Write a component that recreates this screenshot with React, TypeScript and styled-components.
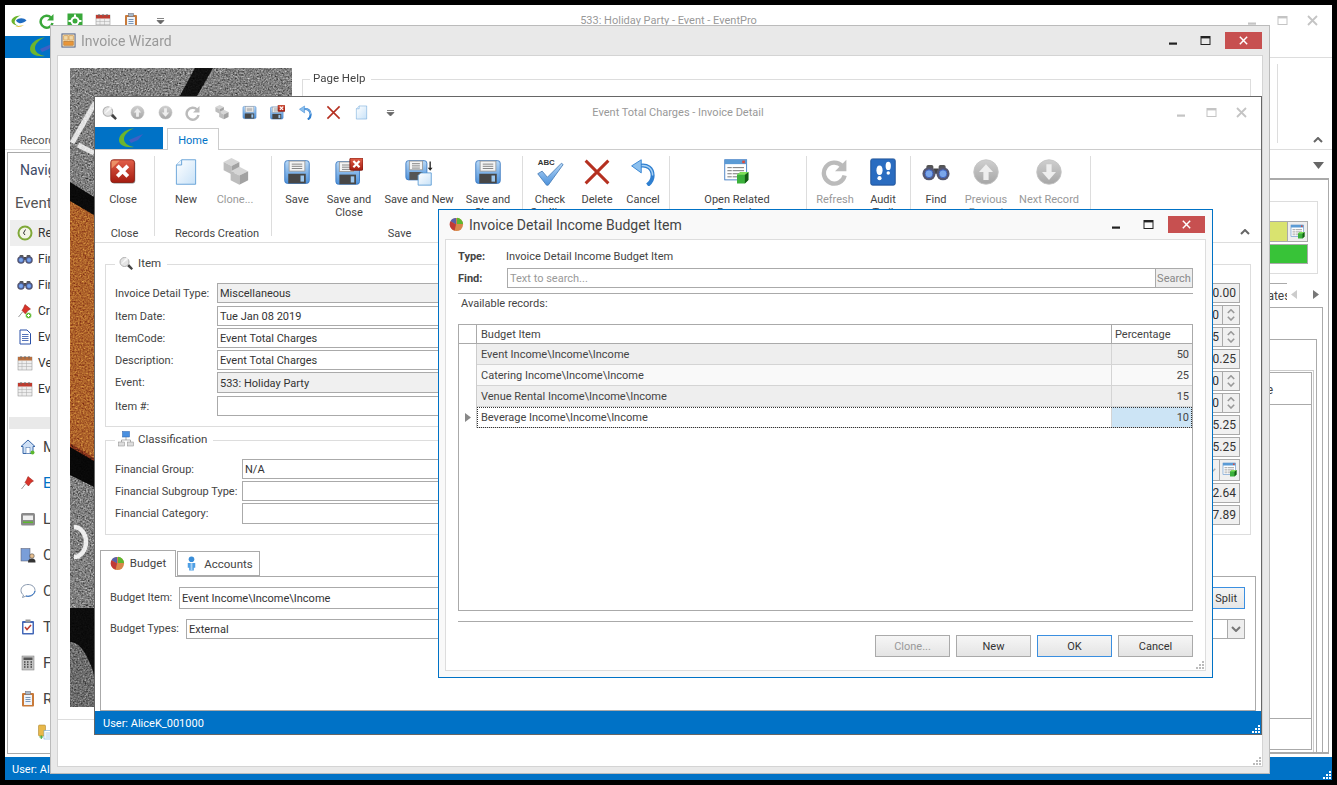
import React from "react";
import styled, { createGlobalStyle } from "styled-components";

const GlobalStyle = createGlobalStyle`
  html, body { margin: 0; padding: 0; background: #000; }
  body { font-family: Roboto, "Noto Sans", sans-serif; font-size: 11px; color: #333; }
  * { box-sizing: border-box; }
`;

const BLUE = "#0072c6";

/* ---------- shell ---------- */

const Desktop = styled.div`
  position: relative;
  width: 1337px;
  height: 785px;
  background: #000;
  overflow: hidden;
`;

const Win = styled.div<{ $l: number; $t: number; $w: number; $h: number; $z: number }>`
  position: absolute;
  left: ${(p) => p.$l}px;
  top: ${(p) => p.$t}px;
  width: ${(p) => p.$w}px;
  height: ${(p) => p.$h}px;
  z-index: ${(p) => p.$z};
  display: flex;
  flex-direction: column;
`;

const MainWin = styled(Win)`
  background: #fff;
`;

const WizardWin = styled(Win)`
  background: #e9e9e9;
  border: 1px solid #bbb;
`;

const DetailWin = styled(Win)`
  background: #fff;
  border: 1px solid #666;
`;

const DialogWin = styled(Win)`
  background: #f9f9f9;
  border: 1px solid ${BLUE};
`;

const TitleRow = styled.div<{ $h: number }>`
  flex: none;
  height: ${(p) => p.$h}px;
  display: grid;
  grid-template-columns: 1fr auto 1fr;
  align-items: center;
  color: #999;
`;

const Qat = styled.div`
  display: flex;
  align-items: center;
`;

const QatSlot = styled.div`
  width: 28px;
  display: flex;
  justify-content: center;
`;

const QatDrop = styled.div`
  width: 14px;
  margin-left: 8px;
  display: flex;
  justify-content: center;
`;

const Controls = styled.div`
  justify-self: end;
  display: flex;
  align-items: center;
  padding-right: 5px;
`;

const Ctl = styled.div`
  width: 30px;
  display: flex;
  justify-content: center;
`;

const CaptionRow = styled.div`
  flex: none;
  height: 29px;
  display: flex;
  align-items: center;
  padding: 0 7px 0 10px;
  gap: 5px;
  font-size: 14px;
`;

const CaptionText = styled.div<{ $dim?: boolean }>`
  flex: 1;
  color: ${(p) => (p.$dim ? "#999" : "#444")};
`;

const CaptionBtn = styled.div`
  width: 27px;
  display: flex;
  justify-content: center;
`;

const CloseBtn = styled.div`
  width: 37px;
  height: 17px;
  margin-left: 1.5px;
  background: #c75050;
  display: flex;
  align-items: center;
  justify-content: center;
`;

const StatusBar = styled.div`
  flex: none;
  height: 23px;
  background: ${BLUE};
  color: #fff;
  display: flex;
  align-items: center;
  justify-content: space-between;
  position: relative;
`;

const StatusText = styled.div<{ $pl: number }>`
  padding: 1px 0 0 ${(p) => p.$pl}px;
`;

const GripWrap = styled.div`
  align-self: flex-end;
  padding: 0 1px 1px 0;
  line-height: 0;
`;

/* ---------- main window ---------- */

const MainTabs = styled.div`
  flex: none;
  height: 22px;
  display: flex;
  border-bottom: 1px solid #ddd;
`;

const LogoTab = styled.div<{ $w: number; $pl: number }>`
  width: ${(p) => p.$w}px;
  height: 22px;
  padding-left: ${(p) => p.$pl}px;
  background: ${BLUE};
  display: flex;
  align-items: center;
`;

const MainRibbon = styled.div`
  flex: none;
  height: 92px;
  display: flex;
  justify-content: space-between;
  border-bottom: 1px solid #ddd;
`;

const RibbonCaption = styled.div`
  align-self: flex-end;
  padding: 0 0 2px 15px;
  color: #555;
`;

const RibbonEnd = styled.div`
  margin: 6px 0;
  width: 55px;
  border-left: 1px solid #ddd;
  display: flex;
  align-items: flex-end;
  justify-content: flex-end;
  padding-right: 9px;
`;

const MainBody = styled.div`
  flex: 1;
  min-height: 0;
  display: flex;
  gap: 4px;
  padding: 2px 3px 3px 2px;
`;

const Nav = styled.div`
  flex: none;
  width: 252px;
  border: 1px solid #aaa;
  display: flex;
  flex-direction: column;
`;

const NavTitle = styled.div`
  height: 34px;
  padding: 9px 0 0 12px;
  font-size: 14px;
  color: #3d4a66;
`;

const NavSection = styled.div`
  height: 33px;
  padding: 7px 0 0 7px;
  font-size: 15px;
  color: #555;
`;

const NavItem = styled.div<{ $on?: boolean }>`
  height: 26px;
  margin-left: 2px;
  padding-left: 7px;
  display: flex;
  align-items: center;
  gap: 5px;
  font-size: 12px;
  background: ${(p) => (p.$on ? "#eee" : "transparent")};
`;

const NavBand = styled.div`
  height: 12px;
  margin: 15px 0 0 1px;
  background: #e9e9e9;
`;

const NavBig = styled.div<{ $on?: boolean }>`
  height: 36px;
  padding-left: 12px;
  display: flex;
  align-items: center;
  gap: 7px;
  font-size: 15px;
  color: ${(p) => (p.$on ? BLUE : "#444")};
`;

const NavTiny = styled.div`
  height: 30px;
  padding-left: 29px;
  display: flex;
  align-items: center;
`;

const MainContent = styled.div`
  flex: 1;
  min-width: 0;
  display: flex;
  flex-direction: column;
`;

const ContentHead = styled.div`
  flex: none;
  height: 26px;
  display: flex;
  align-items: center;
  justify-content: flex-end;
  padding-right: 5px;
`;

const ContentPanel = styled.div`
  flex: 1;
  min-height: 0;
  border-top: 2px solid #aaa;
  border-right: 1px solid #aaa;
  border-bottom: 2px solid #aaa;
  padding-top: 21px;
  display: flex;
  flex-direction: column;
`;

const StateBox = styled.div`
  flex: none;
  height: 73px;
  margin-right: 10px;
  border: 1px solid #ddd;
  padding: 19px 9px 0 0;
  display: flex;
  flex-direction: column;
  align-items: flex-end;
  gap: 2px;
`;

const StateRow = styled.div`
  display: flex;
`;

const Swatch = styled.div<{ $c: string; $w: number; $h: number }>`
  width: ${(p) => p.$w}px;
  height: ${(p) => p.$h}px;
  background: ${(p) => p.$c};
  border: 1px solid #aaa;
`;

const SquareBtn = styled.div`
  width: 21px;
  height: 21px;
  margin-left: -1px;
  border: 1px solid #aaa;
  background: #eee;
  display: flex;
  align-items: center;
  justify-content: center;
`;

const StripRow = styled.div`
  flex: none;
  height: 24px;
  margin-top: 9px;
  display: flex;
  justify-content: flex-end;
  padding-right: 5px;
`;

const StripTab = styled.div`
  width: 200px;
  border-top: 1px solid #aaa;
  padding: 5px 0 0 150px;
  font-size: 12px;
  color: #444;
  overflow: hidden;
  white-space: nowrap;
`;

const StripArrows = styled.div`
  width: 36px;
  padding: 2px 4px 0 4px;
  display: flex;
  justify-content: space-between;
  align-items: center;
  height: 21px;
`;

const Nest = styled.div<{ $mr: number; $pt: number; $c?: string }>`
  flex: 1;
  min-height: 0;
  margin-right: ${(p) => p.$mr}px;
  padding-top: ${(p) => p.$pt}px;
  border: 1px solid ${(p) => p.$c ?? "#aaa"};
  border-bottom: none;
  display: flex;
  flex-direction: column;
`;

const ListPane = styled.div`
  flex: 1;
  min-height: 0;
  margin: 1px 1px 2px 0;
  border: 1px solid #aaa;
  display: flex;
  flex-direction: column;
`;

const ListHead = styled.div`
  flex: none;
  height: 32px;
  border-bottom: 1px solid #aaa;
  text-align: right;
  padding: 10px 38px 0 0;
  font-size: 12px;
  color: #444;
`;

const ListBody = styled.div`
  flex: 1;
`;

const ListFoot = styled.div`
  flex: none;
  height: 31px;
  border-top: 1px solid #aaa;
`;

/* ---------- wizard ---------- */

const WizardInner = styled.div`
  flex: 1;
  min-height: 0;
  margin: 0 6px 6px 6px;
  border: 1px solid #d4d4d4;
  background: #fff;
  display: flex;
  flex-direction: column;
`;

const WizardMain = styled.div`
  flex: none;
  display: flex;
  gap: 10px;
  padding: 12px 11px 12px 12px;
`;

const Photo = styled.div`
  flex: none;
  width: 222px;
  height: 639px;
  line-height: 0;
`;

const Grain = styled.rect`
  mix-blend-mode: overlay;
`;

const WizardFooter = styled.div`
  flex: 1;
  border-top: 1px solid #ddd;
  display: flex;
  justify-content: flex-end;
  align-items: flex-end;
  padding: 0 1px 1px 0;
`;

const Group = styled.fieldset<{ $c?: string; $mt?: number; $pt?: number }>`
  margin: ${(p) => p.$mt ?? 0}px 0 0 0;
  min-width: 0;
  padding: ${(p) => p.$pt ?? 0}px 10px 10px 9px;
  border: 1px solid ${(p) => p.$c ?? "#ddd"};
`;

const Legend = styled.legend<{ $h?: number }>`
  display: flex;
  align-items: center;
  gap: 4px;
  height: ${(p) => p.$h ?? 18}px;
  padding: 0 6px 2px 3px;
  color: #444;
  font-size: 11.5px;
`;

const HelpLegend = styled(Legend)`
  margin-left: -2px;
`;

const HelpGroup = styled(Group)`
  flex: 1;
  margin-top: 2px;
`;

/* ---------- detail window ---------- */

const DetailTabs = styled.div`
  flex: none;
  height: 22px;
  display: flex;
  align-items: flex-end;
  gap: 4px;
  border-bottom: 1px solid #ccc;
`;

const HomeTab = styled.div`
  width: 52px;
  height: 22px;
  margin-bottom: -1px;
  background: #fff;
  border: 1px solid #ccc;
  border-bottom: none;
  color: ${BLUE};
  text-align: center;
  line-height: 23px;
`;

const Ribbon = styled.div`
  flex: none;
  height: 93px;
  padding: 6px 8px 7px 0;
  display: flex;
  border-bottom: 1px solid #ddd;
`;

const RibbonGroup = styled.div<{ $w: number; $pl?: number }>`
  flex: none;
  width: ${(p) => p.$w}px;
  height: 80px;
  padding-left: ${(p) => p.$pl ?? 0}px;
  border-right: 1px solid #ddd;
  display: flex;
  flex-direction: column;
`;

const GroupTools = styled.div`
  flex: 1;
  min-height: 0;
  display: flex;
`;

const GroupName = styled.div`
  height: 13px;
  line-height: 13px;
  margin-bottom: -4px;
  text-align: center;
  color: #444;
  white-space: nowrap;
`;

const Tool = styled.div<{ $w: number; $off?: boolean }>`
  flex: none;
  width: ${(p) => p.$w}px;
  display: flex;
  flex-direction: column;
  align-items: center;
  color: ${(p) => (p.$off ? "#999" : "#444")};
`;

const ToolIcon = styled.div`
  height: 32px;
  margin-bottom: 5px;
  display: flex;
  align-items: center;
`;

const ToolLabel = styled.div`
  line-height: 13px;
  text-align: center;
`;

const Collapse = styled.div`
  margin-left: auto;
  align-self: flex-end;
  padding-right: 3px;
  line-height: 0;
`;

const DetailBody = styled.div`
  flex: 1;
  min-height: 0;
  padding: 12px 5px 0 5px;
  display: flex;
  flex-direction: column;
`;

const FormGrid = styled.div`
  flex: none;
  margin: 0 5px;
  display: grid;
  grid-template-columns: 1fr 521px;
  gap: 10px;
`;

const FormCol = styled.div`
  display: flex;
  flex-direction: column;
`;

const Row = styled.div<{ $h: number }>`
  height: ${(p) => p.$h}px;
  display: flex;
  align-items: flex-start;
`;

const Label = styled.div<{ $w: number }>`
  flex: none;
  width: ${(p) => p.$w}px;
  line-height: 22px;
  color: #444;
  white-space: nowrap;
`;

const PanelLabel = styled(Label)`
  line-height: 20px;
`;

const Field = styled.div<{ $ro?: boolean; $h?: number; $w?: number }>`
  flex: ${(p) => (p.$w ? "none" : 1)};
  width: ${(p) => (p.$w ? `${p.$w}px` : "auto")};
  min-width: 0;
  height: ${(p) => p.$h ?? 20}px;
  line-height: ${(p) => p.$h ?? 20}px;
  padding: 0 2px;
  border: 1px solid #aaa;
  background: ${(p) => (p.$ro ? "#f0f0f0" : "#fff")};
  color: #333;
  white-space: nowrap;
  overflow: hidden;
`;

const NumbersGroup = styled(Group)`
  margin-top: 9px;
  padding: 18px 10px 9px 9px;
  display: flex;
  flex-direction: column;
  align-items: flex-end;
  gap: 2px;
`;

const NumField = styled.div<{ $h?: number }>`
  width: 120px;
  height: ${(p) => p.$h ?? 20}px;
  border: 1px solid #aaa;
  background: #f0f0f0;
  display: flex;
  align-items: center;
  justify-content: flex-end;
  font-size: 12px;
  color: #333;
`;

const NumValue = styled.div`
  padding-right: 3px;
`;

const Spin = styled.div`
  flex: none;
  width: 17px;
  height: 100%;
  border-left: 1px solid #aaa;
  display: flex;
  flex-direction: column;
  align-items: center;
  justify-content: center;
  gap: 2px;
  line-height: 0;
`;

const ComboIconBtn = styled.div`
  flex: none;
  width: 20px;
  height: 100%;
  border-left: 1px solid #aaa;
  display: flex;
  align-items: center;
  justify-content: center;
`;

const ComboArrow = styled.div`
  padding-right: 3px;
  line-height: 0;
`;

const TabStrip = styled.div`
  flex: none;
  height: 26px;
  margin-top: 15px;
  display: flex;
  align-items: flex-end;
  position: relative;
  z-index: 1;
`;

const PageTab = styled.div<{ $w: number; $on?: boolean }>`
  width: ${(p) => p.$w}px;
  height: ${(p) => (p.$on ? 27 : 25)}px;
  margin-bottom: ${(p) => (p.$on ? -1 : 0)}px;
  margin-left: ${(p) => (p.$on ? 0 : 1)}px;
  padding-bottom: ${(p) => (p.$on ? 2 : 0)}px;
  border: 1px solid #aaa;
  border-bottom: ${(p) => (p.$on ? "none" : "1px solid #aaa")};
  background: #fff;
  display: flex;
  align-items: center;
  justify-content: center;
  gap: 5px;
  font-size: 11.5px;
  color: #444;
`;

const TabPanel = styled.div`
  flex: 1;
  min-height: 0;
  border: 1px solid #aaa;
  padding: 10px 10px 0 9px;
  display: flex;
  flex-direction: column;
  gap: 10px;
`;

const PanelRow = styled.div`
  display: flex;
  align-items: center;
`;

const SplitBtn = styled.div`
  flex: none;
  height: 22px;
  margin-left: 8px;
  padding: 0 7px;
  line-height: 21px;
  border: 1px solid #3b8fe0;
  background: linear-gradient(#f4f4f4, #e6e6e6);
  color: #333;
`;

const ComboBtn = styled.div`
  flex: none;
  width: 18px;
  height: 20px;
  margin-left: -1px;
  border: 1px solid #aaa;
  background: #eee;
  display: flex;
  align-items: center;
  justify-content: center;
`;

/* ---------- dialog ---------- */

const DialogInner = styled.div`
  flex: 1;
  min-height: 0;
  margin: 0 6px 6px 6px;
  border: 1px solid #ddd;
  background: #fff;
  padding: 7px 12px 0 12px;
  display: flex;
  flex-direction: column;
  position: relative;
`;

const InfoRow = styled.div<{ $h: number }>`
  flex: none;
  height: ${(p) => p.$h}px;
  display: flex;
  align-items: flex-start;
`;

const InfoKey = styled.div<{ $lh: number }>`
  flex: none;
  width: 48px;
  line-height: ${(p) => p.$lh}px;
  font-weight: 700;
  color: #444;
`;

const InfoValue = styled.div`
  line-height: 20px;
  color: #444;
`;

const SearchInput = styled.div`
  flex: 1;
  margin-left: 1px;
  height: 20px;
  line-height: 19px;
  padding: 0 2px;
  border: 1px solid #aaa;
  color: #999;
`;

const SearchBtn = styled.div`
  flex: none;
  width: 38px;
  height: 20px;
  margin-left: -1px;
  border: 1px solid #aaa;
  background: #eee;
  text-align: center;
  line-height: 19px;
  color: #888;
`;

const Rule = styled.div<{ $mt: number }>`
  flex: none;
  margin-top: ${(p) => p.$mt}px;
  height: 1px;
  background: #aaa;
`;

const AvailableLabel = styled.div`
  flex: none;
  height: 30px;
  padding: 3px 0 0 3px;
  color: #444;
`;

const DataGrid = styled.div`
  flex: 1;
  min-height: 0;
  border: 1px solid #aaa;
`;

const GridRow = styled.div<{ $head?: boolean }>`
  display: flex;
  height: ${(p) => (p.$head ? 19 : 21)}px;
  border-bottom: ${(p) => (p.$head ? "1px solid #aaa" : "none")};
`;

const Indicator = styled.div<{ $head?: boolean }>`
  flex: none;
  width: 18px;
  border-right: 1px solid ${(p) => (p.$head ? "#aaa" : "#ccc")};
  display: flex;
  align-items: center;
  justify-content: center;
`;

const Cells = styled.div<{ $bg: string; $sel?: boolean }>`
  flex: 1;
  display: flex;
  background: ${(p) => p.$bg};
  border-bottom: 1px solid #d4d4d4;
  ${(p) => (p.$sel ? "outline: 1px dotted #333; outline-offset: -1px;" : "")}
`;

const NameCell = styled.div<{ $head?: boolean }>`
  flex: 1;
  padding-left: 4px;
  line-height: ${(p) => (p.$head ? 20 : 22)}px;
  height: ${(p) => (p.$head ? 18 : 20)}px;
  color: #444;
`;

const PercentCell = styled.div<{ $head?: boolean; $sel?: boolean }>`
  flex: none;
  width: 81px;
  height: ${(p) => (p.$head ? 18 : 20)}px;
  padding: 0 3px;
  line-height: ${(p) => (p.$head ? 20 : 22)}px;
  text-align: ${(p) => (p.$head ? "left" : "right")};
  border-left: 1px solid ${(p) => (p.$head ? "#aaa" : "#d4d4d4")};
  background: ${(p) => (p.$sel ? "#cce4f5" : "transparent")};
  color: #444;
`;

const ButtonRow = styled.div`
  flex: none;
  margin: 13px 0 13px 0;
  display: flex;
  justify-content: flex-end;
  gap: 6px;
`;

const DlgButton = styled.div<{ $focus?: boolean; $off?: boolean }>`
  width: 75px;
  height: 22px;
  line-height: 21px;
  text-align: center;
  border: 1px solid ${(p) => (p.$focus ? "#3b8fe0" : "#aaa")};
  background: linear-gradient(#f6f6f6, #e4e4e4);
  color: ${(p) => (p.$off ? "#999" : "#333")};
`;

const DialogGrip = styled.div`
  position: absolute;
  right: 1px;
  bottom: 1px;
  line-height: 0;
`;

/* ---------- icons ---------- */

const Svg = styled.svg.attrs((p: { $vb?: string }) => ({ viewBox: p.$vb ?? "0 0 32 32" }))<{ $s: number; $vb?: string }>`
  display: block;
  flex: none;
  width: ${(p) => p.$s}px;
  height: ${(p) => p.$s}px;
`;

const WideSvg = styled.svg<{ $w: number; $h: number }>`
  display: block;
  flex: none;
  width: ${(p) => p.$w}px;
  height: ${(p) => p.$h}px;
`;

const DefsHolder = styled.svg`
  position: absolute;
  width: 0;
  height: 0;
`;

const Defs = () => (
  <DefsHolder>
    <defs>
      <linearGradient id="gBlue" x1="0" y1="0" x2="0" y2="1">
        <stop offset="0" stopColor="#b8d8f6" />
        <stop offset="1" stopColor="#4d92dc" />
      </linearGradient>
      <linearGradient id="gDoc" x1="0" y1="0" x2="1" y2="1">
        <stop offset="0" stopColor="#fff" />
        <stop offset="1" stopColor="#c8e2f8" />
      </linearGradient>
      <linearGradient id="gRed" x1="0" y1="0" x2="0" y2="1">
        <stop offset="0" stopColor="#e2604a" />
        <stop offset="1" stopColor="#a51c10" />
      </linearGradient>
      <linearGradient id="gGray" x1="0" y1="0" x2="0" y2="1">
        <stop offset="0" stopColor="#cfcfcf" />
        <stop offset="1" stopColor="#a6a6a6" />
      </linearGradient>
    </defs>
  </DefsHolder>
);

type IconProps = { s?: number };

const Floppy = ({ s = 28 }: IconProps) => (
  <Svg $s={s}>
    <rect x="2" y="3" width="28" height="26" rx="3" fill="url(#gBlue)" stroke="#3a78c0" />
    <rect x="7" y="3.5" width="18" height="11.5" fill="#f4f4f4" stroke="#9a9a9a" />
    <path d="M10 7h12M10 9.5h12M10 12h12" stroke="#777" />
    <rect x="6" y="18" width="20" height="11" fill="#474747" />
    <rect x="20" y="20" width="4" height="7" fill="#9cc7ee" />
  </Svg>
);

const FloppyX = ({ s = 28 }: IconProps) => (
  <Svg $s={s}>
    <rect x="1" y="4" width="27" height="26" rx="3" fill="url(#gBlue)" stroke="#3a78c0" />
    <rect x="5" y="4.5" width="16" height="11" fill="#f4f4f4" stroke="#9a9a9a" />
    <path d="M8 8h10M8 10.5h10M8 13h10" stroke="#777" />
    <rect x="5" y="19" width="19" height="11" fill="#474747" />
    <rect x="18" y="21" width="4" height="7" fill="#9cc7ee" />
    <rect x="17" y="0" width="15" height="14" rx="1.5" fill="url(#gRed)" stroke="#7a1a10" />
    <path d="M21 3.5l7 7M28 3.5l-7 7" stroke="#fff" strokeWidth="2.6" />
  </Svg>
);

const FloppyNew = ({ s = 28 }: IconProps) => (
  <Svg $s={s}>
    <rect x="1" y="3" width="24" height="22" rx="3" fill="url(#gBlue)" stroke="#3a78c0" />
    <rect x="5" y="3.5" width="15" height="10" fill="#f4f4f4" stroke="#9a9a9a" />
    <path d="M8 6.5h9M8 9h9M8 11.5h9" stroke="#777" />
    <rect x="5" y="16" width="15" height="9" fill="#555" />
    <path d="M18 17h12v14H15v-11z" fill="url(#gDoc)" stroke="#5b9bd5" />
    <path d="M28 4h1.5v7h2l-2.7 3.5L26 11h2z" fill="#222" />
  </Svg>
);

const CloseIcon = ({ s = 28 }: IconProps) => (
  <Svg $s={s}>
    <rect x="3" y="3" width="27" height="26" rx="3" fill="#222" opacity=".5" />
    <rect x="2" y="2" width="27" height="26" rx="3" fill="url(#gRed)" stroke="#8a2014" />
    <path d="M3 3h9L3 12z" fill="#f0a070" opacity=".8" />
    <path d="M9.5 9l12 12M21.5 9l-12 12" stroke="#fff" strokeWidth="4.4" />
  </Svg>
);

const NewDoc = ({ s = 28 }: IconProps) => (
  <Svg $s={s}>
    <path d="M11 2h16v28H5V8z" fill="url(#gDoc)" stroke="#5b9bd5" />
    <path d="M11 2v6H5" fill="#eaf4fd" stroke="#5b9bd5" />
  </Svg>
);

const Cube = ({ x, y, r }: { x: number; y: number; r: number }) => (
  <g>
    <path d={`M${x} ${y - r}L${x + r} ${y - r / 2}L${x} ${y}L${x - r} ${y - r / 2}z`} fill="#d6d6d6" />
    <path d={`M${x - r} ${y - r / 2}L${x} ${y}V${y + r * 1.05}L${x - r} ${y + r * 0.55}z`} fill="#bdbdbd" />
    <path d={`M${x + r} ${y - r / 2}L${x} ${y}V${y + r * 1.05}L${x + r} ${y + r * 0.55}z`} fill="#a2a2a2" />
  </g>
);

const Cubes = ({ s = 28 }: IconProps) => (
  <Svg $s={s}>
    <Cube x={12} y={9} r={9} />
    <Cube x={21} y={20} r={10} />
  </Svg>
);

const XMark = ({ s = 28 }: IconProps) => (
  <Svg $s={s}>
    <path d="M3 3l26 26M29 3L3 29" stroke="#b53020" strokeWidth="3.4" />
  </Svg>
);

const UndoArrow = ({ s = 28 }: IconProps) => (
  <Svg $s={s}>
    <path d="M12 9c9-2 15 3 15 11 0 4-2 8-6 11" fill="none" stroke="#2f7fd0" strokeWidth="4.6" />
    <path d="M12 9c9-2 15 3 15 11" fill="none" stroke="#a9d2f5" strokeWidth="1.6" />
    <path d="M3 9L14 2v15z" fill="#8cc0ee" stroke="#2f7fd0" />
  </Svg>
);

const RefreshIcon = ({ s = 28, c = "#bbb" }: IconProps & { c?: string }) => (
  <Svg $s={s}>
    <path d="M24 9a12 12 0 1 0 3 11" fill="none" stroke={c} strokeWidth="5" />
    <path d="M29 2v13H16z" fill={c} />
  </Svg>
);

const CircleArrow = ({ s = 28, down }: IconProps & { down?: boolean }) => (
  <Svg $s={s}>
    <circle cx="16" cy="16" r="14" fill="url(#gGray)" stroke="#c4c4c4" />
    <path
      d={down ? "M13 7h6v9h5l-8 9-8-9h5z" : "M13 25h-0v-9H8l8-9 8 9h-5v9z"}
      fill="#eee"
    />
  </Svg>
);

const Binoculars = ({ s = 28 }: IconProps) => (
  <Svg $s={s}>
    <rect x="13" y="12" width="6" height="6" fill="#444" />
    <rect x="5" y="8" width="8" height="7" rx="2" fill="#555" />
    <rect x="19" y="8" width="8" height="7" rx="2" fill="#555" />
    <circle cx="8" cy="18" r="7.5" fill="#555770" />
    <circle cx="24" cy="18" r="7.5" fill="#555770" />
    <circle cx="8" cy="18" r="4.5" fill="#7aa6ea" stroke="#3a5fc0" />
    <circle cx="24" cy="18" r="4.5" fill="#7aa6ea" stroke="#3a5fc0" />
  </Svg>
);

const SpellTextIcon = styled.text`
  font-family: "Liberation Sans", sans-serif;
  font-size: 9px;
  font-weight: 700;
  fill: #333;
`;

const SpellCheck = ({ s = 28 }: IconProps) => (
  <Svg $s={s}>
    <SpellTextIcon x="2" y="8">ABC</SpellTextIcon>
    <path d="M2 18l5-3 6 7L29 6l2 1.5L14 31h-2z" fill="url(#gBlue)" stroke="#4a7fb8" />
  </Svg>
);

const GreenCube = ({ x, y }: { x: number; y: number }) => (
  <g transform={`translate(${x} ${y})`}>
    <path d="M0 3l4-3h9v9l-4 4H0z" fill="#3bb03b" />
    <path d="M9 3h4V0L9 3v10l4-4V3z" fill="#155c15" />
    <path d="M0 3l4-3h9L9 3z" fill="#7ee05a" />
  </g>
);

const RelatedIcon = ({ s = 28 }: IconProps) => (
  <Svg $s={s}>
    <rect x="2" y="2" width="25" height="23" fill="#fff" stroke="#3a78c0" />
    <rect x="2" y="2" width="25" height="5" fill="#5b9bd5" />
    <rect x="22" y="3" width="3" height="3" fill="#e04a3a" />
    <path d="M5 11h5M11 11h13M5 14.5h5M11 14.5h13M5 18h5M11 18h8M5 21.5h5M11 21.5h6" stroke="#666" />
    <GreenCube x={16} y={16} />
  </Svg>
);

const AuditIcon = ({ s = 28 }: IconProps) => (
  <Svg $s={s}>
    <rect x="2" y="1" width="28" height="30" rx="2" fill="#2a6cc0" stroke="#1c4f94" />
    <ellipse cx="12" cy="14" rx="3.5" ry="5.5" fill="#fff" />
    <ellipse cx="12" cy="23" rx="2.4" ry="2.4" fill="#fff" />
    <ellipse cx="22" cy="9" rx="3" ry="4.8" fill="#fff" />
    <ellipse cx="22" cy="17" rx="2" ry="2" fill="#fff" />
  </Svg>
);

const Magnifier = ({ s = 28 }: IconProps) => (
  <Svg $s={s}>
    <path d="M18 22l9 8 3-3-8-9z" fill="#444" />
    <circle cx="13" cy="14" r="9" fill="#e4e4e4" stroke="#b0b0b0" strokeWidth="2" />
    <path d="M5 20L17 4l4 4z" fill="#fff" opacity=".75" />
  </Svg>
);

const Pie = ({ s = 28 }: IconProps) => (
  <Svg $s={s}>
    <circle cx="16" cy="16" r="14" fill="#d8874a" />
    <path d="M17 15V1.5A14 14 0 0 1 30 15z" fill="#5cb82e" />
    <path d="M15 16V2A14 14 0 0 0 3 9z" fill="#5860a8" />
    <path d="M15 16L3 9A14 14 0 0 0 12 29z" fill="#c03a36" />
  </Svg>
);

const PersonIcon = ({ s = 28 }: IconProps) => (
  <Svg $s={s}>
    <circle cx="16" cy="7" r="6" fill="#3a8ed8" />
    <path d="M8 15h16v10h-3v6H11v-6H8z" fill="#4f9fe4" />
    <path d="M14 15h4v16h-4z" fill="#a8d2f5" />
  </Svg>
);

const HierarchyIcon = ({ s = 28 }: IconProps) => (
  <Svg $s={s}>
    <rect x="9" y="1" width="14" height="11" fill="#4a90e0" stroke="#2a5fa8" />
    <path d="M16 12v6M7 18h18v4M7 18v4" fill="none" stroke="#666" />
    <rect x="1" y="22" width="12" height="8" fill="#ddd" stroke="#888" />
    <rect x="19" y="22" width="12" height="8" fill="#ddd" stroke="#888" />
  </Svg>
);

const WizardIcon = ({ s = 28 }: IconProps) => (
  <Svg $s={s}>
    <rect x="2" y="2" width="28" height="28" fill="#f7e0b8" stroke="#4a5f8a" strokeWidth="2" />
    <rect x="6" y="6" width="9" height="9" fill="#f0d8a8" stroke="#c07820" />
    <rect x="17" y="6" width="9" height="9" fill="#f0d8a8" stroke="#c07820" />
    <rect x="6" y="18" width="20" height="8" fill="#e8963a" stroke="#a05a10" />
  </Svg>
);

const LogoSwirl = ({ w = 28, h = 22 }: { w?: number; h?: number }) => (
  <WideSvg $w={w} $h={h} viewBox="0 0 28 22">
    <path d="M17 1C7 3 2 8 2 13c0 5 6 8 15 7-6-1-10-4-10-8 0-4 4-8 10-11z" fill="#6cb52d" />
    <path d="M12 13l14-6-5 6-7 3z" fill="#3f5fc4" />
  </WideSvg>
);

const EyeLogo = ({ s = 16 }: IconProps) => (
  <Svg $s={s}>
    <path d="M20 5C8 5 1 11 1 16c0 5 7 9 14 10C8 23 6 19 8 15c2-5 6-8 12-10z" fill="#6cb52d" />
    <path d="M10 15c5-6 16-6 21 0-6 5-11 6-15 5-3-1-5-3-6-5z" fill="#1f6cc0" />
    <path d="M8 27c6 2 13 1 18-3-5 1-12 2-18 3z" fill="#e0c030" />
  </Svg>
);

const GearBox = ({ s = 16 }: IconProps) => (
  <Svg $s={s}>
    <rect x="1" y="1" width="30" height="30" fill="#39a83a" />
    <circle cx="16" cy="16" r="9" fill="#fff" />
    <circle cx="16" cy="16" r="5" fill="#39a83a" />
    <path d="M14 3h4v5h-4zM14 24h4v5h-4zM3 14h5v4H3zM24 14h5v4h-5z" fill="#fff" />
  </Svg>
);

const CalendarIcon = ({ s = 16, accent = "#c03a2e" }: IconProps & { accent?: string }) => (
  <Svg $s={s}>
    <rect x="2" y="4" width="28" height="26" fill="#eee" stroke="#888" />
    <rect x="2" y="4" width="28" height="7" fill={accent} />
    <path d="M8 2v5M16 2v5M24 2v5" stroke="#666" strokeWidth="2" />
    <path d="M2 17h28M2 23h28M10 11v19M19 11v19" stroke="#aaa" />
  </Svg>
);

const ClipboardIcon = ({ s = 16, c = "#c87a3a" }: IconProps & { c?: string }) => (
  <Svg $s={s}>
    <rect x="4" y="4" width="24" height="27" rx="2" fill={c} />
    <rect x="8" y="8" width="16" height="20" fill="#eef4fb" />
    <rect x="11" y="1" width="10" height="6" fill="#a8b8c8" stroke="#667" />
    <path d="M11 13h10M11 17h10M11 21h10" stroke="#5b7fa8" strokeWidth="1.6" />
  </Svg>
);

const TaskIcon = ({ s = 16 }: IconProps) => (
  <Svg $s={s}>
    <rect x="4" y="4" width="24" height="27" rx="2" fill="#4468b8" />
    <rect x="7" y="8" width="18" height="20" fill="#fff" />
    <rect x="11" y="1" width="10" height="6" fill="#999" />
    <path d="M10 16l4 5 8-9" fill="none" stroke="#c03a2e" strokeWidth="3" />
  </Svg>
);

const ClockIcon = ({ s = 16 }: IconProps) => (
  <Svg $s={s}>
    <circle cx="16" cy="16" r="13" fill="#f4f4e8" stroke="#7fa838" strokeWidth="4" />
    <path d="M17 9l-4 7 3 4" fill="none" stroke="#333" strokeWidth="2" />
  </Svg>
);

const PinIcon = ({ s = 16, plus }: IconProps & { plus?: boolean }) => (
  <Svg $s={s}>
    <path d="M16 3l11 9-5 3-5 7-7-7 3-5z" fill="#d8342a" stroke="#8a1a14" />
    <path d="M11 18L3 28" stroke="#999" strokeWidth="2" />
    {plus && <circle cx="23" cy="25" r="6" fill="#5cb82e" stroke="#fff" />}
    {plus && <path d="M20 25h6M23 22v6" stroke="#fff" strokeWidth="2" />}
  </Svg>
);

const DocLines = ({ s = 16 }: IconProps) => (
  <Svg $s={s}>
    <path d="M6 2h14l7 7v21H6z" fill="#fff" stroke="#2a50a8" strokeWidth="2" />
    <path d="M10 11h13M10 15h13M10 19h13M10 23h13" stroke="#2a50a8" strokeWidth="1.6" />
  </Svg>
);

const HouseIcon = ({ s = 16 }: IconProps) => (
  <Svg $s={s}>
    <path d="M16 2L2 15h4v14h20V15h4z" fill="#cfe0f5" stroke="#3a68a8" strokeWidth="2" />
    <rect x="12" y="17" width="8" height="12" fill="#fff" stroke="#3a68a8" />
    <circle cx="25" cy="27" r="4" fill="#5cb82e" />
  </Svg>
);

const PrinterIcon = ({ s = 16 }: IconProps) => (
  <Svg $s={s}>
    <rect x="2" y="4" width="28" height="25" rx="3" fill="#8a8a8a" />
    <rect x="6" y="9" width="20" height="9" fill="#eee" />
    <rect x="6" y="21" width="20" height="3" fill="#5cb82e" />
  </Svg>
);

const OfficeIcon = ({ s = 16 }: IconProps) => (
  <Svg $s={s}>
    <rect x="2" y="3" width="18" height="25" fill="#7a9ed8" stroke="#556" />
    <circle cx="24" cy="18" r="4.5" fill="#e8c090" stroke="#333" />
    <path d="M16 31c0-6 3-8 8-8s7 2 7 8z" fill="#333" />
  </Svg>
);

const BubbleIcon = ({ s = 16 }: IconProps) => (
  <Svg $s={s}>
    <path d="M16 3C8 3 2 8 2 15c0 4 2 7 5 9l-2 5 7-3c1 0 3 1 4 1 8 0 14-5 14-12S24 3 16 3z" fill="#fff" stroke="#8a9ab0" strokeWidth="2" />
    <path d="M12 26c8 2 16-3 18-10" fill="none" stroke="#2a70c8" strokeWidth="2" />
  </Svg>
);

const CalcIcon = ({ s = 16 }: IconProps) => (
  <Svg $s={s}>
    <rect x="4" y="2" width="24" height="28" fill="#c4c4c4" stroke="#777" />
    <rect x="7" y="5" width="18" height="5" fill="#555" />
    <path d="M8 14h3M14 14h3M21 14h3M8 19h3M14 19h3M21 19h3M8 24h3M14 24h3M21 24h3" stroke="#444" strokeWidth="2.6" />
  </Svg>
);

const FolderDoc = ({ s = 16 }: IconProps) => (
  <Svg $s={s}>
    <rect x="3" y="2" width="14" height="22" rx="2" fill="#e8b84a" stroke="#a07820" />
    <rect x="14" y="13" width="16" height="17" fill="#fff" stroke="#5b9bd5" />
    <path d="M17 18h10M17 22h10M17 26h10" stroke="#5b9bd5" />
    <path d="M5 26h7M8.5 23v7" stroke="#3aa83a" strokeWidth="2" />
  </Svg>
);

const SmallDrop = () => (
  <WideSvg $w={9} $h={8} viewBox="0 0 9 8">
    <path d="M1 1.5h7M1 3.5h7L4.5 7z" stroke="#666" fill="#666" strokeWidth=".8" />
  </WideSvg>
);

const Chevron = ({ up, c = "#666", w = 10 }: { up?: boolean; c?: string; w?: number }) => (
  <WideSvg $w={w} $h={w * 0.6} viewBox="0 0 10 6">
    <path d={up ? "M1 5l4-4 4 4" : "M1 1l4 4 4-4"} fill="none" stroke={c} strokeWidth="2" />
  </WideSvg>
);

const Triangle = ({ dir, c = "#777" }: { dir: "left" | "right" | "down"; c?: string }) => (
  <WideSvg $w={dir === "down" ? 11 : 6} $h={dir === "down" ? 7 : 9} viewBox={dir === "down" ? "0 0 11 7" : "0 0 6 9"}>
    <path d={dir === "down" ? "M0 0h11L5.5 7z" : dir === "left" ? "M6 0v9L0 4.5z" : "M0 0v9l6-4.5z"} fill={c} />
  </WideSvg>
);

const Grip = ({ c = "#fff" }: { c?: string }) => (
  <WideSvg $w={8} $h={8} viewBox="0 0 8 8">
    <path d="M6 0h2v2H6zM3 3h2v2H3zM6 3h2v2H6zM0 6h2v2H0zM3 6h2v2H3zM6 6h2v2H6z" fill={c} />
  </WideSvg>
);

const GlyphMin = ({ c }: { c: string }) => (
  <WideSvg $w={11} $h={11} viewBox="0 0 11 11">
    <rect x="1" y="7.5" width="8" height="2.2" fill={c} />
  </WideSvg>
);

const GlyphMax = ({ c }: { c: string }) => (
  <WideSvg $w={11} $h={11} viewBox="0 0 11 11">
    <rect x="1" y="1.5" width="9" height="8" fill="none" stroke={c} />
    <rect x="1" y="1" width="9" height="2.4" fill={c} />
  </WideSvg>
);

const GlyphClose = ({ c, w = 11 }: { c: string; w?: number }) => (
  <WideSvg $w={w} $h={w} viewBox="0 0 11 11">
    <path d="M1 1l9 9M10 1l-9 9" stroke={c} strokeWidth="1.8" />
  </WideSvg>
);

/* ---------- small pieces ---------- */

const DimControls = () => (
  <Controls>
    <Ctl><GlyphMin c="#c4c4c4" /></Ctl>
    <Ctl><GlyphMax c="#c4c4c4" /></Ctl>
    <Ctl><GlyphClose c="#c4c4c4" /></Ctl>
  </Controls>
);

const ActiveControls = () => (
  <>
    <CaptionBtn><GlyphMin c="#222" /></CaptionBtn>
    <CaptionBtn><GlyphMax c="#222" /></CaptionBtn>
    <CloseBtn><GlyphClose c="#fff" w={9} /></CloseBtn>
  </>
);

const ToolBtn = ({ w, label, off, children }: { w: number; label: string; off?: boolean; children: React.ReactNode }) => (
  <Tool $w={w} $off={off}>
    <ToolIcon>{children}</ToolIcon>
    <ToolLabel>{label}</ToolLabel>
  </Tool>
);

const Spinner = () => (
  <Spin>
    <Chevron up c="#999" w={8} />
    <Chevron c="#999" w={8} />
  </Spin>
);

const PhotoPicture = () => (
  <WideSvg $w={222} $h={639} viewBox="0 0 222 639">
    <defs>
      <filter id="grain" x="0" y="0" width="100%" height="100%" colorInterpolationFilters="sRGB">
        <feTurbulence type="fractalNoise" baseFrequency="0.6" numOctaves="2" seed="4" />
        <feColorMatrix values="0.42 0.42 0.42 0 -0.13  0.42 0.42 0.42 0 -0.13  0.42 0.42 0.42 0 -0.13  0 0 0 0 1" />
      </filter>
    </defs>
    <rect width="222" height="639" fill="#7e7e7e" />
    <path d="M125 0h18l-16 28-20 40H88z" fill="#111" />
    <path d="M25 35L2 75" stroke="#e4e4e4" strokeWidth="5" />
    <path d="M8 77l16 8" stroke="#e4e4e4" strokeWidth="5" />
    <path d="M0 114l24 15v28L0 135z" fill="#0a0a0a" />
    <path d="M0 133l24 14v247L0 379z" fill="#ad622a" />
    <path d="M0 375l24 15v4L0 381z" fill="#7a2f18" />
    <path d="M0 379l24 14v26L0 407z" fill="#080808" />
    <path d="M0 540h24v100H0z" fill="#0c0c0c" />
    <path d="M0 574c8 0 16 8 24 32v33H0z" fill="#6c6c6c" />
    <path d="M4 459a12 15 0 0 1 0 30" fill="none" stroke="#eee" strokeWidth="4.5" />
    <Grain width="222" height="639" filter="url(#grain)" />
  </WideSvg>
);

const budgetRows = [
  { name: "Event Income\\Income\\Income", pct: 50, bg: "#eee" },
  { name: "Catering Income\\Income\\Income", pct: 25, bg: "#f9f9f9" },
  { name: "Venue Rental Income\\Income\\Income", pct: 15, bg: "#eee" },
  { name: "Beverage Income\\Income\\Income", pct: 10, bg: "#fff", sel: true },
];

const navItems = [
  { label: "Recent", icon: <ClockIcon />, on: true },
  { label: "Find", icon: <Binoculars s={16} /> },
  { label: "Find", icon: <Binoculars s={16} /> },
  { label: "Create", icon: <PinIcon plus /> },
  { label: "Events", icon: <DocLines /> },
  { label: "Venues", icon: <CalendarIcon accent="#b87040" /> },
  { label: "Events", icon: <CalendarIcon /> },
];

const navBig = [
  { label: "Main", icon: <HouseIcon /> },
  { label: "Events", icon: <PinIcon />, on: true },
  { label: "Locations", icon: <PrinterIcon /> },
  { label: "Clients", icon: <OfficeIcon /> },
  { label: "Chat", icon: <BubbleIcon /> },
  { label: "Tasks", icon: <TaskIcon /> },
  { label: "Financial", icon: <CalcIcon /> },
  { label: "Reports", icon: <ClipboardIcon /> },
];

export default function App() {
  return (
    <Desktop>
      <GlobalStyle />
      <Defs />

      <MainWin $l={5} $t={5} $w={1327} $h={775} $z={1}>
        <TitleRow $h={31}>
          <Qat>
            <QatSlot><EyeLogo /></QatSlot>
            <QatSlot><RefreshIcon s={16} c="#3aa83a" /></QatSlot>
            <QatSlot><GearBox /></QatSlot>
            <QatSlot><CalendarIcon /></QatSlot>
            <QatSlot><ClipboardIcon /></QatSlot>
            <QatDrop><SmallDrop /></QatDrop>
          </Qat>
          <div>533: Holiday Party - Event - EventPro</div>
          <DimControls />
        </TitleRow>
        <MainTabs>
          <LogoTab $w={60} $pl={23}><LogoSwirl /></LogoTab>
        </MainTabs>
        <MainRibbon>
          <RibbonCaption>Records</RibbonCaption>
          <RibbonEnd><Chevron up c="#666" /></RibbonEnd>
        </MainRibbon>
        <MainBody>
          <Nav>
            <NavTitle>Navigator</NavTitle>
            <NavSection>Event Tasks</NavSection>
            {navItems.map((n, i) => (
              <NavItem key={i} $on={n.on}>{n.icon}{n.label}</NavItem>
            ))}
            <NavBand />
            {navBig.map((n) => (
              <NavBig key={n.label} $on={n.on}>{n.icon}{n.label}</NavBig>
            ))}
            <NavTiny><FolderDoc /></NavTiny>
          </Nav>
          <MainContent>
            <ContentHead><Triangle dir="down" c="#666" /></ContentHead>
            <ContentPanel>
              <StateBox>
                <StateRow>
                  <Swatch $c="#d9e36f" $w={180} $h={21} />
                  <SquareBtn><RelatedIcon s={16} /></SquareBtn>
                </StateRow>
                <Swatch $c="#38c338" $w={200} $h={20} />
              </StateBox>
              <StripRow>
                <StripTab>Estimates</StripTab>
                <StripArrows>
                  <Triangle dir="left" c="#ccc" />
                  <Triangle dir="right" c="#777" />
                </StripArrows>
              </StripRow>
              <Nest $mr={5} $pt={31}>
                <Nest $mr={5} $pt={30}>
                  <Nest $mr={2} $pt={0} $c="#ccc">
                    <ListPane>
                      <ListHead>Name</ListHead>
                      <ListBody />
                      <ListFoot />
                    </ListPane>
                  </Nest>
                </Nest>
              </Nest>
            </ContentPanel>
          </MainContent>
        </MainBody>
        <StatusBar>
          <StatusText $pl={7}>User: AliceK_001000</StatusText>
          <GripWrap><Grip /></GripWrap>
        </StatusBar>
      </MainWin>

      <WizardWin $l={50} $t={25} $w={1220} $h={749} $z={2}>
        <CaptionRow>
          <WizardIcon s={15} />
          <CaptionText $dim>Invoice Wizard</CaptionText>
          <ActiveControls />
        </CaptionRow>
        <WizardInner>
          <WizardMain>
            <Photo><PhotoPicture /></Photo>
            <HelpGroup $c="#ddd">
              <HelpLegend>Page Help</HelpLegend>
            </HelpGroup>
          </WizardMain>
          <WizardFooter><Grip c="#bbb" /></WizardFooter>
        </WizardInner>
      </WizardWin>

      <DetailWin $l={94} $t={96} $w={1168} $h={639} $z={3}>
        <TitleRow $h={31}>
          <Qat>
            <QatSlot><Magnifier s={17} /></QatSlot>
            <QatSlot><CircleArrow s={15} /></QatSlot>
            <QatSlot><CircleArrow s={15} down /></QatSlot>
            <QatSlot><RefreshIcon s={16} /></QatSlot>
            <QatSlot><Cubes s={15} /></QatSlot>
            <QatSlot><Floppy s={15} /></QatSlot>
            <QatSlot><FloppyX s={15} /></QatSlot>
            <QatSlot><UndoArrow s={15} /></QatSlot>
            <QatSlot><XMark s={15} /></QatSlot>
            <QatSlot><NewDoc s={15} /></QatSlot>
            <QatDrop><SmallDrop /></QatDrop>
          </Qat>
          <div>Event Total Charges - Invoice Detail</div>
          <DimControls />
        </TitleRow>
        <DetailTabs>
          <LogoTab $w={68} $pl={22}><LogoSwirl /></LogoTab>
          <HomeTab>Home</HomeTab>
        </DetailTabs>
        <Ribbon>
          <RibbonGroup $w={60}>
            <GroupTools>
              <ToolBtn w={56} label="Close"><CloseIcon /></ToolBtn>
            </GroupTools>
            <GroupName>Close</GroupName>
          </RibbonGroup>
          <RibbonGroup $w={117} $pl={8}>
            <GroupTools>
              <ToolBtn w={46} label="New"><NewDoc /></ToolBtn>
              <ToolBtn w={52} label="Clone..." off><Cubes /></ToolBtn>
            </GroupTools>
            <GroupName>Records Creation</GroupName>
          </RibbonGroup>
          <RibbonGroup $w={251} $pl={5}>
            <GroupTools>
              <ToolBtn w={40} label="Save"><Floppy /></ToolBtn>
              <ToolBtn w={64} label="Save and Close"><FloppyX /></ToolBtn>
              <ToolBtn w={76} label="Save and New"><FloppyNew /></ToolBtn>
              <ToolBtn w={62} label="Save and Close"><Floppy /></ToolBtn>
            </GroupTools>
            <GroupName>Save</GroupName>
          </RibbonGroup>
          <RibbonGroup $w={147} $pl={1}>
            <GroupTools>
              <ToolBtn w={52} label="Check Spelling"><SpellCheck /></ToolBtn>
              <ToolBtn w={42} label="Delete"><XMark /></ToolBtn>
              <ToolBtn w={50} label="Cancel"><UndoArrow /></ToolBtn>
            </GroupTools>
          </RibbonGroup>
          <RibbonGroup $w={137} $pl={22}>
            <GroupTools>
              <ToolBtn w={90} label="Open Related Records"><RelatedIcon /></ToolBtn>
            </GroupTools>
          </RibbonGroup>
          <RibbonGroup $w={104} $pl={4}>
            <GroupTools>
              <ToolBtn w={48} label="Refresh" off><RefreshIcon /></ToolBtn>
              <ToolBtn w={48} label="Audit Trail"><AuditIcon /></ToolBtn>
            </GroupTools>
          </RibbonGroup>
          <RibbonGroup $w={180}>
            <GroupTools>
              <ToolBtn w={50} label="Find"><Binoculars /></ToolBtn>
              <ToolBtn w={50} label="Previous Record" off><CircleArrow /></ToolBtn>
              <ToolBtn w={76} label="Next Record" off><CircleArrow down /></ToolBtn>
            </GroupTools>
          </RibbonGroup>
          <Collapse><Chevron up c="#666" /></Collapse>
        </Ribbon>
        <DetailBody>
          <FormGrid>
            <FormCol>
              <Group $pt={10}>
                <Legend $h={18}><Magnifier s={16} />Item</Legend>
                <Row $h={23}><Label $w={102}>Invoice Detail Type:</Label><Field $ro>Miscellaneous</Field></Row>
                <Row $h={22}><Label $w={102}>Item Date:</Label><Field>Tue Jan 08 2019</Field></Row>
                <Row $h={22}><Label $w={102}>ItemCode:</Label><Field>Event Total Charges</Field></Row>
                <Row $h={22}><Label $w={102}>Description:</Label><Field>Event Total Charges</Field></Row>
                <Row $h={24}><Label $w={102}>Event:</Label><Field $ro $h={21}>533: Holiday Party</Field></Row>
                <Row $h={20}><Label $w={102}>Item #:</Label><Field /></Row>
              </Group>
              <Group $mt={3} $pt={9}>
                <Legend $h={20}><HierarchyIcon s={16} />Classification</Legend>
                <Row $h={22}><Label $w={127}>Financial Group:</Label><Field>N/A</Field></Row>
                <Row $h={22}><Label $w={127}>Financial Subgroup Type:</Label><Field /></Row>
                <Row $h={21}><Label $w={127}>Financial Category:</Label><Field $h={21} /></Row>
              </Group>
            </FormCol>
            <NumbersGroup>
              <NumField><NumValue>0.00</NumValue></NumField>
              <NumField><NumValue>0</NumValue><Spinner /></NumField>
              <NumField><NumValue>7.5</NumValue><Spinner /></NumField>
              <NumField><NumValue>0.25</NumValue></NumField>
              <NumField><NumValue>0</NumValue><Spinner /></NumField>
              <NumField><NumValue>0</NumValue><Spinner /></NumField>
              <NumField><NumValue>15.25</NumValue></NumField>
              <NumField><NumValue>15.25</NumValue></NumField>
              <NumField $h={22}>
                <ComboArrow><Chevron c="#aaa" w={7} /></ComboArrow>
                <ComboIconBtn><RelatedIcon s={16} /></ComboIconBtn>
              </NumField>
              <NumField><NumValue>22.64</NumValue></NumField>
              <NumField><NumValue>37.89</NumValue></NumField>
            </NumbersGroup>
          </FormGrid>
          <TabStrip>
            <PageTab $w={76} $on><Pie s={15} />Budget</PageTab>
            <PageTab $w={83}><PersonIcon s={15} />Accounts</PageTab>
          </TabStrip>
          <TabPanel>
            <PanelRow>
              <PanelLabel $w={69}>Budget Item:</PanelLabel>
              <Field $h={22}>Event Income\Income\Income</Field>
              <SplitBtn>Edit Split</SplitBtn>
            </PanelRow>
            <PanelRow>
              <PanelLabel $w={76}>Budget Types:</PanelLabel>
              <Field>External</Field>
              <ComboBtn><Chevron c="#777" w={10} /></ComboBtn>
            </PanelRow>
          </TabPanel>
        </DetailBody>
        <StatusBar>
          <StatusText $pl={8}>User: AliceK_001000</StatusText>
          <GripWrap><Grip /></GripWrap>
        </StatusBar>
      </DetailWin>

      <DialogWin $l={438} $t={209} $w={775} $h={469} $z={4}>
        <CaptionRow>
          <Pie s={15} />
          <CaptionText>Invoice Detail Income Budget Item</CaptionText>
          <ActiveControls />
        </CaptionRow>
        <DialogInner>
          <InfoRow $h={21}>
            <InfoKey $lh={20}>Type:</InfoKey>
            <InfoValue>Invoice Detail Income Budget Item</InfoValue>
          </InfoRow>
          <InfoRow $h={20}>
            <InfoKey $lh={21}>Find:</InfoKey>
            <SearchInput>Text to search...</SearchInput>
            <SearchBtn>Search</SearchBtn>
          </InfoRow>
          <Rule $mt={5} />
          <AvailableLabel>Available records:</AvailableLabel>
          <DataGrid>
            <GridRow $head>
              <Indicator $head />
              <NameCell $head>Budget Item</NameCell>
              <PercentCell $head>Percentage</PercentCell>
            </GridRow>
            {budgetRows.map((r) => (
              <GridRow key={r.name}>
                <Indicator>{r.sel && <Triangle dir="right" c="#888" />}</Indicator>
                <Cells $bg={r.bg} $sel={r.sel}>
                  <NameCell>{r.name}</NameCell>
                  <PercentCell $sel={r.sel}>{r.pct}</PercentCell>
                </Cells>
              </GridRow>
            ))}
          </DataGrid>
          <Rule $mt={10} />
          <ButtonRow>
            <DlgButton $off>Clone...</DlgButton>
            <DlgButton>New</DlgButton>
            <DlgButton $focus>OK</DlgButton>
            <DlgButton>Cancel</DlgButton>
          </ButtonRow>
          <DialogGrip><Grip c="#bbb" /></DialogGrip>
        </DialogInner>
      </DialogWin>
    </Desktop>
  );
}
